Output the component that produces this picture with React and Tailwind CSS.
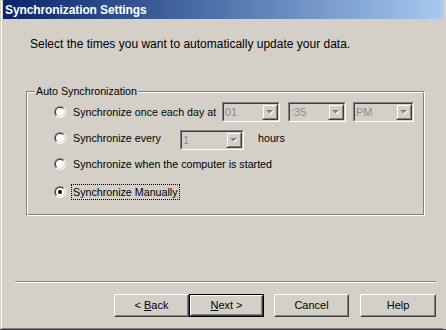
import React from "react";

const font = { fontFamily: '"Liberation Sans", Arial, sans-serif' };

function Radio({ checked }) {
  return (
    <svg width="12" height="12" viewBox="0 0 12 12" className="shrink-0">
      <path d="M1.757 10.243 A6 6 0 0 1 10.243 1.757 Z" fill="#808080" />
      <path d="M10.243 1.757 A6 6 0 0 1 1.757 10.243 Z" fill="#ffffff" />
      <path d="M2.464 9.536 A5 5 0 0 1 9.536 2.464 Z" fill="#404040" />
      <path d="M9.536 2.464 A5 5 0 0 1 2.464 9.536 Z" fill="#d4d0c8" />
      <circle cx="6" cy="6" r="4" fill="#ffffff" />
      {checked && <circle cx="6" cy="6" r="2" fill="#000000" />}
    </svg>
  );
}

function Combo({ value, w }) {
  return (
    <div
      className={`${w} h-[20px] shrink-0 border border-t-[#808080] border-l-[#808080] border-r-white border-b-white`}
    >
      <div className="h-full flex border border-t-[#404040] border-l-[#404040] border-r-[#d4d0c8] border-b-[#d4d0c8] bg-[#d4d0c8]">
        <div className="flex-1 pl-[1px] text-[11px] leading-[16px] text-[#8c8c8c]">{value}</div>
        <div className="w-[16px] h-full border border-t-[#d4d0c8] border-l-[#d4d0c8] border-r-[#404040] border-b-[#404040]">
          <div className="h-full flex items-center justify-center border border-t-white border-l-white border-r-[#808080] border-b-[#808080]">
            <svg width="8" height="5" viewBox="0 0 8 5">
              <path d="M1 1 L8 1 L4.5 4.5 Z" fill="#ffffff" />
              <path d="M0 0 L7 0 L3.5 3.5 Z" fill="#808080" />
            </svg>
          </div>
        </div>
      </div>
    </div>
  );
}

function Button({ children, def, w = "w-[75px]" }) {
  const inner = (
    <div className="h-full border border-t-white border-l-white border-r-[#404040] border-b-[#404040]">
      <div className="h-full flex items-center justify-center border border-t-[#d4d0c8] border-l-[#d4d0c8] border-r-[#808080] border-b-[#808080] text-[11px] text-black">
        {children}
      </div>
    </div>
  );
  if (def) {
    return <div className={`${w} h-[23px] border border-black`}>{inner}</div>;
  }
  return <div className={`${w} h-[23px]`}>{inner}</div>;
}

export default function App() {
  return (
    <div
      className="w-[446px] h-[330px] bg-[#d4d0c8] flex flex-col pl-[1px] pr-[3px] border-b border-[#404040] text-black"
      style={font}
    >
      <div className="flex-1 flex flex-col border-l border-white border-b border-b-[#808080] pl-[1px]">
        {/* Title bar */}
        <div className="h-[19px] shrink-0 flex items-center pl-[2px] bg-gradient-to-r from-[#0a246a] to-[#a6caf0]">
          <span className="text-white font-bold text-[12px] leading-[14px] tracking-[-0.1px]">
            Synchronization Settings
          </span>
        </div>

        {/* Intro text */}
        <div className="mt-[18px] ml-[27px] text-[12px] leading-[14px]">
          Select the times you want to automatically update your data.
        </div>

        {/* Group box */}
        <div className="relative mt-[40px] ml-[23px] w-[399px] h-[125px] border border-t-[#808080] border-l-[#808080] border-r-white border-b-white">
          <div className="h-full border border-t-white border-l-white border-r-[#808080] border-b-[#808080] flex flex-col pt-[6px] pl-[26px] text-[10.7px]">
            <div className="h-[26px] flex items-center">
              <Radio />
              <span className="ml-[7px] w-[149px]">Synchronize once each day at</span>
              <Combo value="01" w="w-[58px]" />
              <div className="ml-[8px]">
                <Combo value=":35" w="w-[58px]" />
              </div>
              <div className="ml-[7px]">
                <Combo value="PM" w="w-[61px]" />
              </div>
            </div>
            <div className="h-[26px] flex items-center">
              <Radio />
              <span className="ml-[7px] w-[107px]">Synchronize every</span>
              <div className="mt-[4px]">
                <Combo value="1" w="w-[64px]" />
              </div>
              <span className="ml-[14px]">hours</span>
            </div>
            <div className="h-[26px] flex items-center">
              <Radio />
              <span className="ml-[7px]">Synchronize when the computer is started</span>
            </div>
            <div className="mt-[2px] h-[26px] flex items-center">
              <Radio checked />
              <span className="ml-[5px] border border-dotted border-black px-[1px] leading-[14px]">
                Synchronize Manually
              </span>
            </div>
          </div>
          <span className="absolute left-[8px] top-[-8px] bg-[#d4d0c8] px-[1px] text-[10.7px] leading-[14px]">
            Auto Synchronization
          </span>
        </div>

        {/* Separator */}
        <div className="mt-[65px] ml-[12px] w-[421px] h-[2px] border-t border-[#808080] border-b border-b-white" />

        {/* Buttons */}
        <div className="mt-[11px] ml-[111px] flex">
          <Button>
            &lt; <span className="underline ml-[3px]">B</span>ack
          </Button>
          <Button def>
            <span className="underline">N</span>ext &gt;
          </Button>
          <div className="ml-[10px]">
            <Button>Cancel</Button>
          </div>
          <div className="ml-[11px]">
            <Button w="w-[76px]">Help</Button>
          </div>
        </div>
      </div>
    </div>
  );
}
